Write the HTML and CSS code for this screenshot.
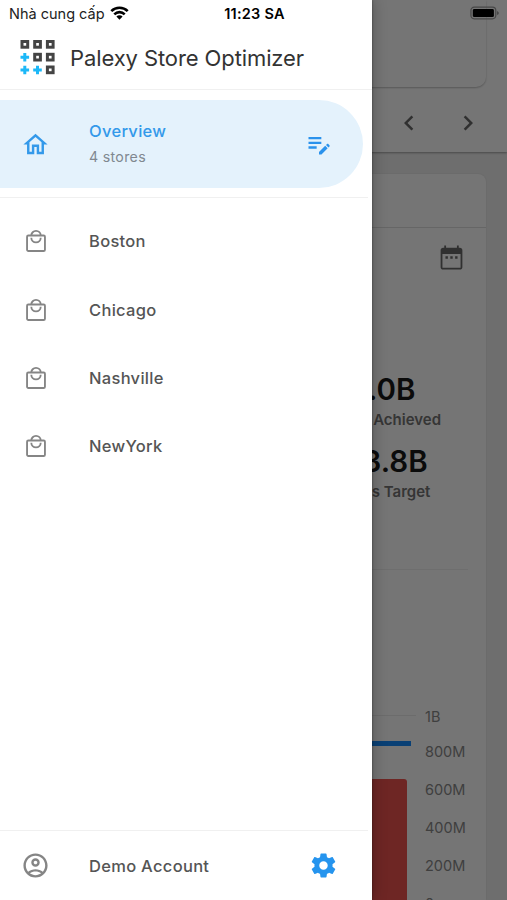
FILE: index.html
```html
<!DOCTYPE html>
<html lang="en">

<head>
    <meta charset="utf-8">
    <meta name="viewport" content="width=device-width, initial-scale=1.0">
    <title>Palexy Store Optimizer</title>
    <link rel="stylesheet" href="styles.css">
</head>

<body>
    <svg class="symbols">
        <symbol id="bag" viewBox="0 0 20 22">
            <rect x="1.800" y="6" width="16.400" height="14.200" rx="1.200"/>
            <path d="M5.700 6a4.300 4.300 0 0 1 8.600 0M5.700 8a4.300 4.300 0 0 0 8.600 0"/>
        </symbol>
    </svg>

    <main class="dashboard">
        <header class="toolbar">
            <div class="store-box"></div>
            <div class="pager">
                <svg class="arrow" viewBox="0 0 24 24"><path d="M15.410 7.410 14 6l-6 6 6 6 1.410-1.410L10.830 12z"/></svg>
                <svg class="arrow" viewBox="0 0 24 24"><path d="M10 6 8.590 7.410 13.170 12l-4.580 4.590L10 18l6-6z"/></svg>
            </div>
        </header>
        <section class="card">
            <div class="card-header"></div>
            <svg class="calendar" viewBox="0 0 24 24"><path d="M19 4h-1V2h-1.500v2h-9V2H6v2H5c-1.110 0-2 .9-2 2v14c0 1.100.89 2 2 2h14c1.100 0 2-.9 2-2V6c0-1.100-.9-2-2-2zm.5 16.500h-15V9h15v11.500zM9 13H7v-2h2v2zm4 0h-2v-2h2v2zm4 0h-2v-2h2v2z"/></svg>
            <div class="figures">
                <strong class="number">1.0B</strong>
                <span class="caption">Sales Achieved</span>
                <strong class="number">$3.8B</strong>
                <span class="caption">Sales Target</span>
            </div>
            <div class="chart">
                <div class="plot">
                    <div class="grid-line"></div>
                    <div class="target-line"></div>
                    <div class="bar"></div>
                </div>
                <ul class="axis">
                    <li>1B</li>
                    <li>800M</li>
                    <li>600M</li>
                    <li>400M</li>
                    <li>200M</li>
                    <li>0</li>
                </ul>
            </div>
        </section>
    </main>

    <div class="scrim"></div>

    <aside class="drawer">
        <header class="brand">
            <svg class="logo" viewBox="0 0 35 35">
                <g class="logo-squares">
                    <rect x="2" y="1.500" width="5.700" height="5.700"/>
                    <rect x="14.700" y="1.500" width="5.700" height="5.700"/>
                    <rect x="27.400" y="1.500" width="5.700" height="5.700"/>
                    <rect x="14.700" y="14.300" width="5.700" height="5.700"/>
                    <rect x="27.400" y="14.300" width="5.700" height="5.700"/>
                    <rect x="27.400" y="27" width="5.700" height="5.700"/>
                </g>
                <path class="logo-plus" d="M4.800 13v8.500M.5 17.300h8.600M4.800 25.700v8.500M.5 30h8.600M17.500 25.700v8.500M13.200 30h8.600"/>
            </svg>
            <h1 class="title">Palexy Store Optimizer</h1>
        </header>

        <a class="item overview">
            <svg class="icon" viewBox="0 0 24 24"><path d="m12 5.690 5 4.500V18h-2v-6H9v6H7v-7.810l5-4.500M12 3 2 12h3v8h6v-6h2v6h6v-8h3L12 3z"/></svg>
            <span class="label">Overview<small class="count">4 stores</small></span>
            <svg class="edit" viewBox="0 0 24 24"><path d="M3 10h11v2H3v-2zm0-2h11V6H3v2zm0 8h7v-2H3v2zm15.010-3.130.71-.71c.39-.39 1.020-.39 1.410 0l.71.71c.39.39.39 1.020 0 1.410l-.71.71-2.120-2.120zm-.71.71-5.300 5.300V21h2.120l5.300-5.300-2.120-2.120z"/></svg>
        </a>

        <nav class="stores">
            <a class="item"><svg class="icon bag"><use href="#bag"/></svg><span class="label">Boston</span></a>
            <a class="item"><svg class="icon bag"><use href="#bag"/></svg><span class="label">Chicago</span></a>
            <a class="item"><svg class="icon bag"><use href="#bag"/></svg><span class="label">Nashville</span></a>
            <a class="item"><svg class="icon bag"><use href="#bag"/></svg><span class="label">NewYork</span></a>
        </nav>

        <footer class="item account">
            <svg class="icon" viewBox="0 0 24 24"><path d="M12 2C6.480 2 2 6.480 2 12s4.480 10 10 10 10-4.480 10-10S17.520 2 12 2zM7.350 18.500C8.660 17.560 10.260 17 12 17s3.340.56 4.650 1.500C15.340 19.440 13.740 20 12 20s-3.340-.56-4.650-1.500zm10.790-1.380C16.450 15.800 14.320 15 12 15s-4.450.8-6.140 2.120C4.700 15.730 4 13.950 4 12c0-4.420 3.580-8 8-8s8 3.580 8 8c0 1.950-.7 3.730-1.860 5.120zM12 6c-1.930 0-3.500 1.570-3.500 3.500S10.070 13 12 13s3.500-1.570 3.500-3.500S13.930 6 12 6zm0 5c-.83 0-1.500-.67-1.500-1.500S11.170 8 12 8s1.500.67 1.500 1.500S12.830 11 12 11z"/></svg>
            <span class="label">Demo Account</span>
            <svg class="settings" viewBox="0 0 24 24"><path d="M19.430 12.980c.04-.32.07-.64.07-.98s-.03-.66-.07-.98l2.110-1.650c.19-.15.24-.42.12-.64l-2-3.460c-.12-.22-.39-.3-.61-.22l-2.490 1c-.52-.4-1.080-.73-1.690-.98l-.38-2.650C14.460 2.180 14.250 2 14 2h-4c-.25 0-.46.18-.49.42l-.38 2.650c-.61.25-1.170.59-1.690.98l-2.490-1c-.23-.09-.49 0-.61.22l-2 3.460c-.13.22-.07.49.12.64l2.110 1.650c-.04.32-.07.65-.07.98s.03.66.07.98l-2.110 1.650c-.19.15-.24.42-.12.64l2 3.460c.12.22.39.3.61.22l2.490-1c.52.4 1.080.73 1.690.98l.38 2.650c.03.24.24.42.49.42h4c.25 0 .46-.18.49-.42l.38-2.650c.61-.25 1.170-.59 1.690-.98l2.490 1c.23.09.49 0 .61-.22l2-3.460c.12-.22.07-.49-.12-.64l-2.110-1.650zM12 15.500c-1.930 0-3.500-1.570-3.500-3.500s1.570-3.500 3.500-3.500 3.500 1.570 3.500 3.500-1.570 3.500-3.500 3.500z"/></svg>
        </footer>
    </aside>

    <div class="status-bar">
        <span class="carrier">Nhà cung cấp
            <svg class="wifi" viewBox="0 0 19 14">
                <path class="wave" d="M1.300 5.200a11.600 11.600 0 0 1 16.400 0M4.300 8.300a7.400 7.400 0 0 1 10.400 0"/>
                <path d="M9.500 13.700 6.400 10.600a4.400 4.400 0 0 1 6.200 0z"/>
            </svg>
        </span>
        <span class="time">11:23 SA</span>
        <svg class="battery" viewBox="0 0 32 14">
            <rect class="shell" x="1" y=".8" width="26.500" height="12.400" rx="3.500"/>
            <rect x="3" y="2.700" width="22.500" height="8.600" rx="1.500"/>
            <path class="cap" d="M28.800 4.800v4.400q2-.8 2-2.200t-2-2.200z"/>
        </svg>
    </div>
</body>

</html>
```
FILE: styles.css
```css
* {
    box-sizing: border-box;
    margin: 0;
    padding: 0;
}

body {
    position: relative;
    width: 507px;
    height: 900px;
    overflow: hidden;
    font-family: Inter, "Noto Sans", sans-serif;
    background-color: #f0f0f0;
}

svg {
    flex: none;
    fill: currentColor;
}

.symbols {
    display: none;
}

/* dashboard behind the drawer */
.dashboard {
    height: 900px;
    overflow: hidden;
}

.toolbar {
    height: 152px;
    background-color: #fff;
    box-shadow: 0 1px 2px rgba(0, 0, 0, 0.35);
}

.store-box {
    height: 87px;
    margin-right: 21px;
    border-radius: 0 0 10px 10px;
    box-shadow: 0 1px 2px rgba(0, 0, 0, 0.25);
}

.pager {
    display: flex;
    justify-content: flex-end;
    gap: 29px;
    padding: 21px 24px 0 0;
    color: #6a6a6a;
}

.arrow {
    width: 30px;
    height: 30px;
}

.card {
    display: flex;
    flex-direction: column;
    height: 726px;
    margin: 22px 21px 0 20px;
    border-radius: 8px 8px 0 0;
    overflow: hidden;
    background-color: #fff;
    box-shadow: 0 0 2px rgba(0, 0, 0, 0.1);
}

.card-header {
    flex: none;
    height: 54px;
    border-bottom: 1px solid #dedede;
}

.calendar {
    align-self: flex-end;
    width: 29px;
    height: 29px;
    margin: 15px 20px 0 0;
    color: #6a6a6a;
}

.figures {
    display: flex;
    flex: none;
    flex-direction: column;
    align-items: center;
    height: 298px;
    margin: 0 18px 0 283px;
    padding-top: 98px;
    border-bottom: 1px solid #f0f0f0;
}

.number {
    font-size: 29.500px;
    line-height: 38px;
    font-weight: 600;
    color: #1a1a1a;
}

.caption {
    height: 34px;
    font-size: 15px;
    line-height: 24px;
    font-weight: 600;
    color: #757575;
    white-space: nowrap;
}

.chart {
    display: flex;
    gap: 9px;
    padding: 128px 0 0 300px;
}

.plot {
    width: 96px;
    padding-top: 17px;
}

.grid-line {
    border-top: 1px solid #ebebeb;
}

.target-line {
    width: 91px;
    height: 5px;
    margin-top: 25px;
    background-color: #148cff;
}

.bar {
    width: 87px;
    height: 150px;
    margin-top: 33px;
    border-radius: 3px;
    background-color: #ef5350;
}

.axis {
    list-style: none;
    font-size: 14.500px;
    line-height: 38px;
    color: #8a8a8a;
}

.axis li:first-child {
    height: 35px;
}

.scrim {
    position: absolute;
    inset: 0;
    background-color: rgba(0, 0, 0, 0.54);
}

/* drawer */
.drawer {
    position: absolute;
    inset: 0 auto 0 0;
    display: flex;
    flex-direction: column;
    width: 372px;
    background-color: #fff;
    box-shadow: 0 0 14px rgba(0, 0, 0, 0.3), 0 0 2px rgba(0, 0, 0, 0.4);
    color: #555;
}

.brand {
    display: flex;
    align-items: center;
    gap: 15px;
    height: 90px;
    padding: 26px 0 0 20px;
    border-bottom: 1px solid #f0f0f0;
}

.logo {
    width: 35px;
    height: 35px;
}

.logo-squares {
    fill: none;
    stroke: #444;
    stroke-width: 3;
}

.logo-plus {
    stroke: #1cb8f8;
    stroke-width: 3;
}

.title {
    font-size: 22px;
    line-height: 30px;
    font-weight: 400;
    letter-spacing: -0.100px;
    color: #333;
    white-space: nowrap;
}

.item {
    display: flex;
    align-items: center;
    height: 68.400px;
    padding-left: 20.500px;
}

.icon {
    width: 29px;
    height: 29px;
    margin-right: 39.500px;
    color: #858585;
}

.bag {
    width: 22px;
    height: 24px;
    margin: 0 42.500px 0 4px;
    fill: none;
    stroke: currentColor;
    stroke-width: 1.700;
}

.label {
    flex: 1;
    font-size: 16.500px;
    line-height: 24px;
    font-weight: 500;
    letter-spacing: 0.300px;
}

.overview {
    height: 88px;
    margin: 10px 9px 9px 0;
    padding-right: 30px;
    border-radius: 0 44px 44px 0;
    background-color: #e4f2fc;
    color: #3399ea;
}

.overview .icon {
    color: #3399ea;
}

.count {
    display: block;
    padding-top: 2px;
    font-size: 14.200px;
    font-weight: 400;
    color: #808890;
}

.edit {
    width: 28px;
    height: 28px;
    color: #2a92ec;
}

.stores {
    flex: 1;
    margin-right: 4px;
    padding-top: 9px;
    border-top: 1px solid #f0f0f0;
}

.account {
    height: 70px;
    margin-right: 4px;
    padding-right: 30px;
    border-top: 1px solid #f0f0f0;
}

.settings {
    width: 29px;
    height: 29px;
    color: #2594ee;
}

/* phone status bar */
.status-bar {
    position: absolute;
    inset: 0 0 auto 0;
    display: grid;
    grid-template-columns: 1fr auto 1fr;
    align-items: center;
    height: 27px;
    padding: 0 7px 0 9px;
    color: #000;
    font-size: 14.500px;
}

.carrier {
    display: flex;
    align-items: center;
    gap: 5px;
    color: #222;
}

.wifi {
    width: 19px;
    height: 14px;
    margin-bottom: 2px;
    color: #000;
}

.wave {
    fill: none;
    stroke: currentColor;
    stroke-width: 2.600;
}

.time {
    font-weight: 600;
    letter-spacing: 0.250px;
}

.battery {
    justify-self: end;
    width: 30px;
    height: 14px;
    margin-bottom: 1px;
}

.shell {
    fill: none;
    stroke: #484848;
    stroke-width: 1.300;
}

.cap {
    fill: #484848;
}
```
